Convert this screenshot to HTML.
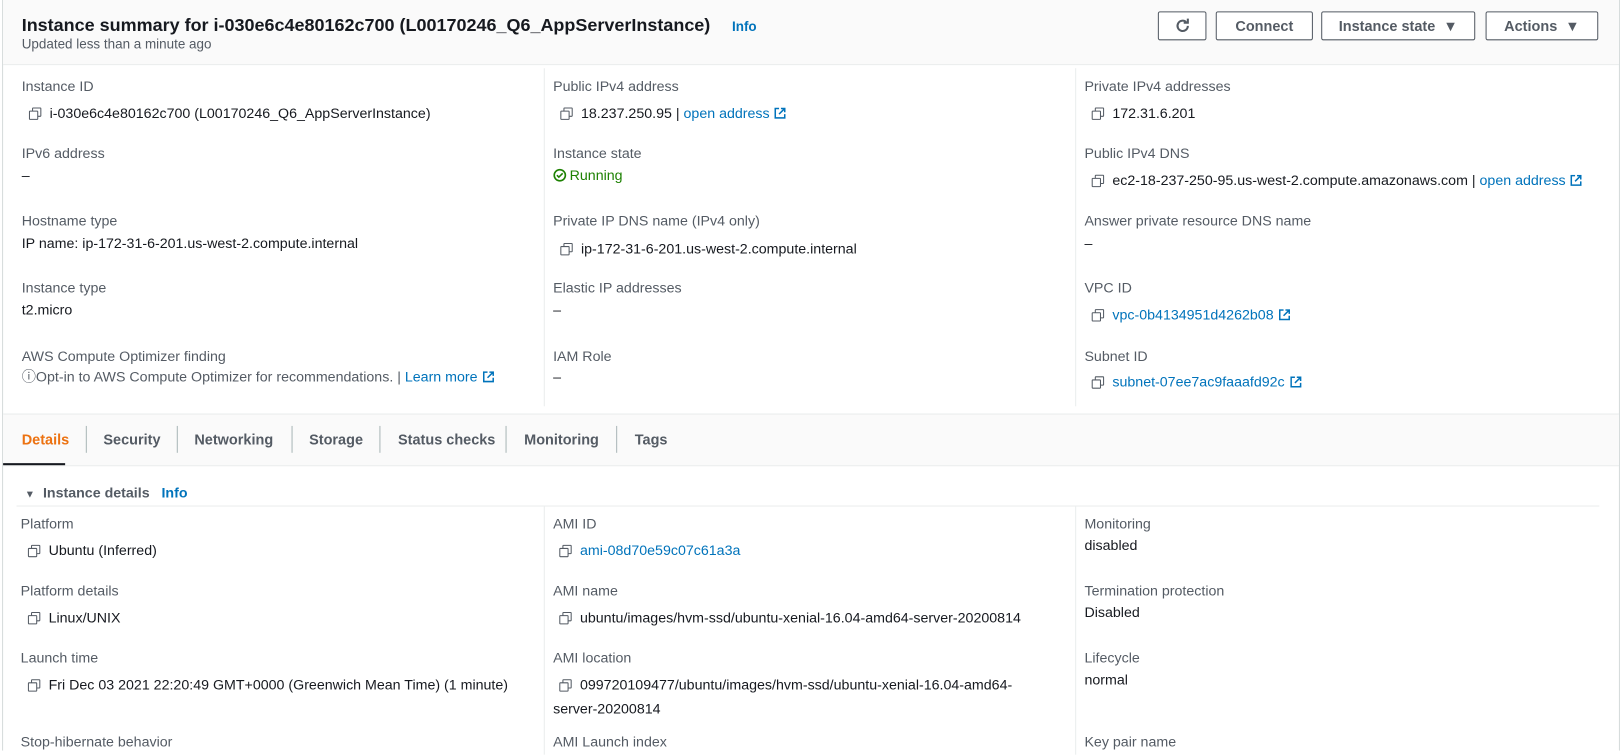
<!DOCTYPE html>
<html><head><meta charset="utf-8"><style>
*{margin:0;padding:0;box-sizing:border-box}
body{width:1621px;height:750px;background:#fff;font-family:"Liberation Sans",sans-serif;color:#16191f;position:relative;overflow:hidden}
#w{position:absolute;left:0;top:0;width:1568px;height:726px;transform:scale(1.0338);transform-origin:0 0;font-size:13.75px}
.a{position:absolute;white-space:nowrap;line-height:18px}
.l{color:#545b64}
.k{color:#0073bb}
.b{font-weight:bold}
.cp{display:inline-block;width:11px;height:11px;position:relative;margin-right:9px;vertical-align:-1px}
.cp:before{content:"";position:absolute;left:3px;top:0;width:7px;height:7px;border:1.5px solid #545b64;border-radius:1px}
.cp:after{content:"";position:absolute;left:0;top:3px;width:7px;height:7px;border:1.5px solid #545b64;border-radius:1px;background:#fff}
.ext{display:inline-block;width:11px;height:11px;margin-left:5px;vertical-align:-1px}
.btn{position:absolute;top:11px;height:28px;border:1px solid #545b64;border-radius:2px;background:#fff;font-weight:bold;color:#545b64;font-size:14px;text-align:center;line-height:26px}
.vl{position:absolute;width:1px;background:#eaeded}
.t{font-size:14px;color:#545b64;font-weight:bold;top:416px}
</style></head><body><div id="w">
<div style="position:absolute;left:2px;top:0;width:1565px;height:726px;border-left:1px solid #d5dbdb;border-right:1px solid #d5dbdb"></div>
<div style="position:absolute;left:3px;top:0;width:1563px;height:63px;background:#fafafa;border-bottom:1px solid #eaeded"></div>
<div class="a b" style="left:21px;top:13px;font-size:17.4px;line-height:22px">Instance summary for i-030e6c4e80162c700 (L00170246_Q6_AppServerInstance)<span class="k" style="font-size:13px;margin-left:21px">Info</span></div>
<div class="a l" style="left:21px;top:34px;font-size:13px">Updated less than a minute ago</div>
<div class="btn" style="left:1120px;width:47px"><svg width="16" height="16" viewBox="0 0 16 16" style="vertical-align:-3px"><path d="M13 8a5 5 0 1 1-1.6-3.7" fill="none" stroke="#545b64" stroke-width="2"/><path d="M13 1v4h-4" fill="none" stroke="#545b64" stroke-width="2"/></svg></div>
<div class="btn" style="left:1176px;width:94px">Connect</div>
<div class="btn" style="left:1278px;width:149px">Instance state &nbsp;▼</div>
<div class="btn" style="left:1437px;width:109px">Actions &nbsp;▼</div>

<div class="vl" style="left:526px;top:66px;height:327px"></div>
<div class="vl" style="left:1040px;top:66px;height:327px"></div>

<div class="a l" style="left:21px;top:75px">Instance ID</div>
<div class="a" style="left:28px;top:101px"><span class="cp"></span>i-030e6c4e80162c700 (L00170246_Q6_AppServerInstance)</div>
<div class="a l" style="left:21px;top:140px">IPv6 address</div>
<div class="a" style="left:21px;top:161px">–</div>
<div class="a l" style="left:21px;top:205px">Hostname type</div>
<div class="a" style="left:21px;top:227px">IP name: ip-172-31-6-201.us-west-2.compute.internal</div>
<div class="a l" style="left:21px;top:270px">Instance type</div>
<div class="a" style="left:21px;top:291px">t2.micro</div>
<div class="a l" style="left:21px;top:336px">AWS Compute Optimizer finding</div>
<div class="a" style="left:21px;top:356px;color:#545b64">ⓘOpt-in to AWS Compute Optimizer for recommendations. | <span class="k">Learn more</span><svg class="ext" viewBox="0 0 12 12"><path d="M5 1H1v10h10V7M7 1h4v4M11 1L5 7" fill="none" stroke="#0073bb" stroke-width="1.6"/></svg></div>

<div class="a l" style="left:535px;top:75px">Public IPv4 address</div>
<div class="a" style="left:542px;top:101px"><span class="cp"></span>18.237.250.95 | <span class="k">open address</span><svg class="ext" viewBox="0 0 12 12"><path d="M5 1H1v10h10V7M7 1h4v4M11 1L5 7" fill="none" stroke="#0073bb" stroke-width="1.6"/></svg></div>
<div class="a l" style="left:535px;top:140px">Instance state</div>
<div class="a" style="left:535px;top:161px;color:#1d8102"><svg width="13" height="13" viewBox="0 0 14 14" style="vertical-align:-2px;margin-right:3px"><circle cx="7" cy="7" r="5.8" fill="none" stroke="#1d8102" stroke-width="1.7"/><path d="M4 7l2 2 4-4" fill="none" stroke="#1d8102" stroke-width="1.7"/></svg>Running</div>
<div class="a l" style="left:535px;top:205px">Private IP DNS name (IPv4 only)</div>
<div class="a" style="left:542px;top:232px"><span class="cp"></span>ip-172-31-6-201.us-west-2.compute.internal</div>
<div class="a l" style="left:535px;top:270px">Elastic IP addresses</div>
<div class="a" style="left:535px;top:291px">–</div>
<div class="a l" style="left:535px;top:336px">IAM Role</div>
<div class="a" style="left:535px;top:356px">–</div>

<div class="a l" style="left:1049px;top:75px">Private IPv4 addresses</div>
<div class="a" style="left:1056px;top:101px"><span class="cp"></span>172.31.6.201</div>
<div class="a l" style="left:1049px;top:140px">Public IPv4 DNS</div>
<div class="a" style="left:1056px;top:166px"><span class="cp"></span>ec2-18-237-250-95.us-west-2.compute.amazonaws.com | <span class="k">open address</span><svg class="ext" viewBox="0 0 12 12"><path d="M5 1H1v10h10V7M7 1h4v4M11 1L5 7" fill="none" stroke="#0073bb" stroke-width="1.6"/></svg></div>
<div class="a l" style="left:1049px;top:205px">Answer private resource DNS name</div>
<div class="a" style="left:1049px;top:227px">–</div>
<div class="a l" style="left:1049px;top:270px">VPC ID</div>
<div class="a k" style="left:1056px;top:296px"><span class="cp"></span>vpc-0b4134951d4262b08<svg class="ext" viewBox="0 0 12 12"><path d="M5 1H1v10h10V7M7 1h4v4M11 1L5 7" fill="none" stroke="#0073bb" stroke-width="1.6"/></svg></div>
<div class="a l" style="left:1049px;top:336px">Subnet ID</div>
<div class="a k" style="left:1056px;top:361px"><span class="cp"></span>subnet-07ee7ac9faaafd92c<svg class="ext" viewBox="0 0 12 12"><path d="M5 1H1v10h10V7M7 1h4v4M11 1L5 7" fill="none" stroke="#0073bb" stroke-width="1.6"/></svg></div>

<div style="position:absolute;left:3px;top:400px;width:1563px;height:51px;background:#fafafa;border-top:1px solid #eaeded;border-bottom:1px solid #eaeded"></div>
<div style="position:absolute;left:3px;top:448px;width:60px;height:2px;background:#16191f"></div>
<div class="a t" style="left:21px;color:#ec7211">Details</div>
<div class="vl" style="left:83px;top:412px;height:26px;background:#aab7b8"></div>
<div class="a t" style="left:100px">Security</div>
<div class="vl" style="left:171px;top:412px;height:26px;background:#aab7b8"></div>
<div class="a t" style="left:188px">Networking</div>
<div class="vl" style="left:282px;top:412px;height:26px;background:#aab7b8"></div>
<div class="a t" style="left:299px">Storage</div>
<div class="vl" style="left:367px;top:412px;height:26px;background:#aab7b8"></div>
<div class="a t" style="left:385px">Status checks</div>
<div class="vl" style="left:489px;top:412px;height:26px;background:#aab7b8"></div>
<div class="a t" style="left:507px">Monitoring</div>
<div class="vl" style="left:596px;top:412px;height:26px;background:#aab7b8"></div>
<div class="a t" style="left:614px">Tags</div>

<div class="a b" style="left:24px;top:468px;color:#545b64"><span style="font-size:10px">▼</span>&nbsp; Instance details &nbsp; <span class="k">Info</span></div>
<div style="position:absolute;left:16px;top:489px;width:1531px;height:1px;background:#eaeded"></div>
<div class="vl" style="left:526px;top:490px;height:240px"></div>
<div class="vl" style="left:1040px;top:490px;height:240px"></div>

<div class="a l" style="left:20px;top:498px">Platform</div>
<div class="a" style="left:27px;top:524px"><span class="cp"></span>Ubuntu (Inferred)</div>
<div class="a l" style="left:20px;top:563px">Platform details</div>
<div class="a" style="left:27px;top:589px"><span class="cp"></span>Linux/UNIX</div>
<div class="a l" style="left:20px;top:628px">Launch time</div>
<div class="a" style="left:27px;top:654px"><span class="cp"></span>Fri Dec 03 2021 22:20:49 GMT+0000 (Greenwich Mean Time) (1 minute)</div>
<div class="a l" style="left:20px;top:709px">Stop-hibernate behavior</div>

<div class="a l" style="left:535px;top:498px">AMI ID</div>
<div class="a k" style="left:541px;top:524px"><span class="cp"></span>ami-08d70e59c07c61a3a</div>
<div class="a l" style="left:535px;top:563px">AMI name</div>
<div class="a" style="left:541px;top:589px"><span class="cp"></span>ubuntu/images/hvm-ssd/ubuntu-xenial-16.04-amd64-server-20200814</div>
<div class="a l" style="left:535px;top:628px">AMI location</div>
<div class="a" style="left:541px;top:654px"><span class="cp"></span>099720109477/ubuntu/images/hvm-ssd/ubuntu-xenial-16.04-amd64-</div>
<div class="a" style="left:535px;top:677px">server-20200814</div>
<div class="a l" style="left:535px;top:709px">AMI Launch index</div>

<div class="a l" style="left:1049px;top:498px">Monitoring</div>
<div class="a" style="left:1049px;top:519px">disabled</div>
<div class="a l" style="left:1049px;top:563px">Termination protection</div>
<div class="a" style="left:1049px;top:584px">Disabled</div>
<div class="a l" style="left:1049px;top:628px">Lifecycle</div>
<div class="a" style="left:1049px;top:649px">normal</div>
<div class="a l" style="left:1049px;top:709px">Key pair name</div>
</div></body></html>
